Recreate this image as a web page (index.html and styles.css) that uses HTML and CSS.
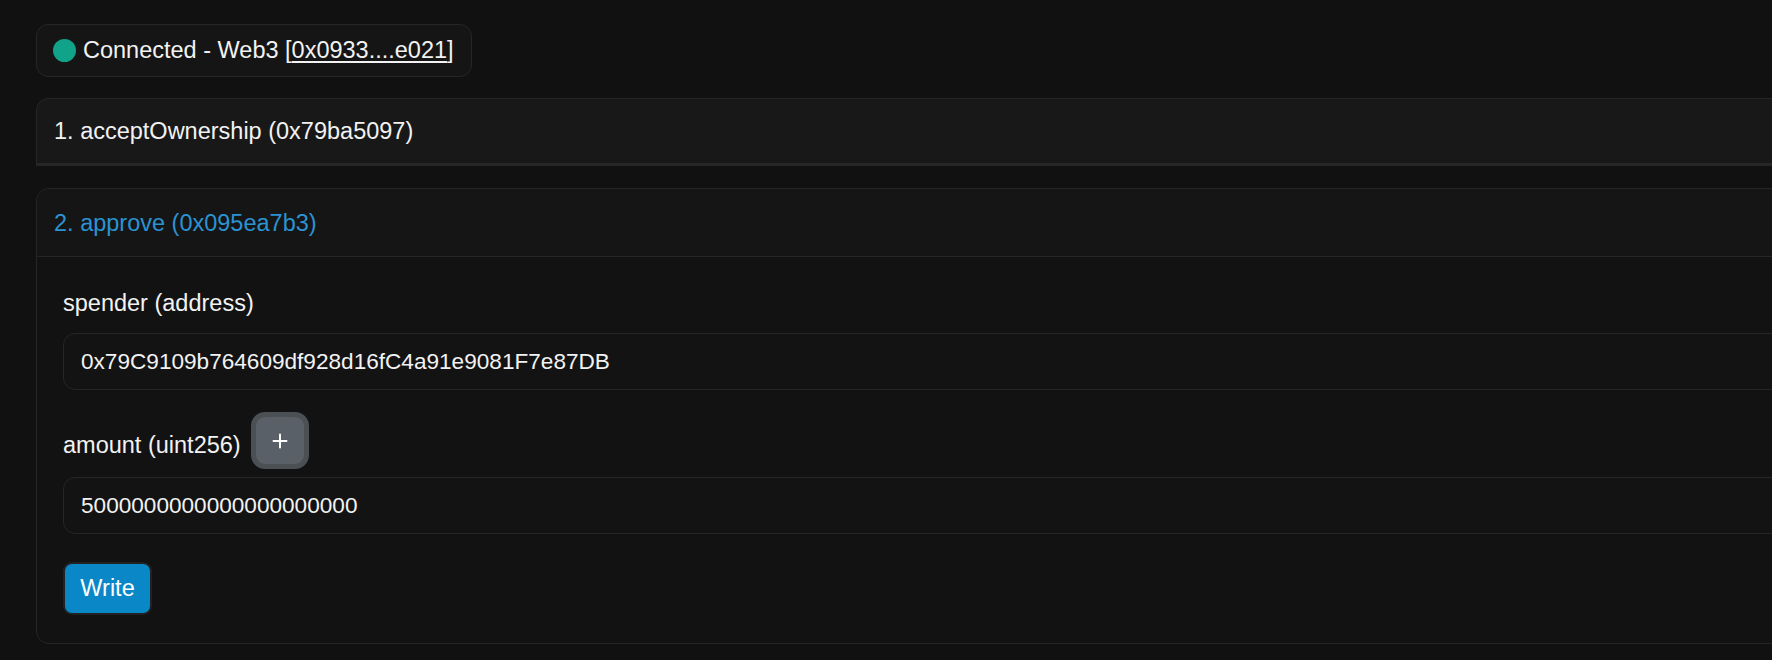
FILE: index.html
```html
<!DOCTYPE html>
<html>
<head>
<meta charset="utf-8">
<link rel="stylesheet" href="styles.css">
</head>
<body>
<div class="page">
  <div class="status">
    <span class="dot"></span>
    <span>Connected - Web3 [<a class="addr" href="#">0x0933....e021</a>]</span>
  </div>

  <div class="card card-collapsed">
    <div class="card-header">1. acceptOwnership (0x79ba5097)</div>
  </div>

  <div class="card card-open">
    <div class="card-header active">2. approve (0x095ea7b3)</div>
    <div class="card-body">
      <div class="field">
        <div class="label-row first"><span class="label">spender (address)</span></div>
        <input class="text-input" type="text" value="0x79C9109b764609df928d16fC4a91e9081F7e87DB">
      </div>
      <div class="field">
        <div class="label-row">
          <span class="label shifted">amount (uint256)</span>
          <button class="plus-btn" type="button">
            <svg width="18" height="18" viewBox="0 0 18 18"><path d="M9 2.5v13M2.5 9h13" stroke="#fff" stroke-width="2" stroke-linecap="round"/></svg>
          </button>
        </div>
        <input class="text-input" type="text" value="5000000000000000000000">
      </div>
      <button class="write-btn" type="button">Write</button>
    </div>
  </div>
</div>
</body>
</html>
```
FILE: styles.css
```css
html, body {
  margin: 0;
  padding: 0;
  background: #111111;
  overflow: hidden;
}
body {
  font-family: "Liberation Sans", Arial, sans-serif;
  font-size: 23.5px;
  color: #f2f2f2;
}
.page {
  padding: 24px 0 0 36px;
  width: 1800px;
}
.status {
  display: inline-flex;
  align-items: center;
  gap: 7px;
  height: 51px;
  padding: 0 17px 0 16px;
  border: 1px solid #262626;
  border-radius: 12px;
  background: #151515;
  line-height: 27px;
}
.dot {
  width: 23px;
  height: 23px;
  border-radius: 50%;
  background: #10a389;
  flex: none;
}
.addr {
  color: #f2f2f2;
  text-decoration: underline;
  text-underline-offset: 3px;
}
.card {
  width: 1780px;
  border: 1px solid #262626;
  box-sizing: border-box;
}
.card-collapsed {
  margin-top: 21px;
  border-radius: 13px 13px 0 0;
  border-bottom: 2px solid #262626;
  background: #181818;
}
.card-open {
  margin-top: 22px;
  border-radius: 13px;
  background: #121212;
}
.card-header {
  padding: 19px 17px 19px 17px;
  line-height: 27px;
  border-bottom: 1px solid #262626;
}
.card-collapsed .card-header {
  padding-bottom: 18px;
}
.card-open .card-header {
  background: #151515;
  border-radius: 13px 13px 0 0;
  padding: 21px 17px 19px 17px;
}
.card-header.active {
  color: #2b93d2;
}
.card-body {
  padding: 0 26px 28px 26px;
}
.field {
  display: flex;
  flex-direction: column;
}
.label-row {
  display: flex;
  align-items: center;
  gap: 10px;
  margin-top: 22px;
  margin-bottom: 8px;
}
.label-row.first {
  margin-top: 33px;
  margin-bottom: 17px;
  line-height: 26px;
}
.label {
  line-height: 26px;
}
.label.shifted {
  margin-top: 9px;
}
.plus-btn {
  width: 58px;
  height: 57px;
  box-sizing: border-box;
  border: 5px solid #4b5055;
  border-radius: 14px;
  background: #596067;
  display: flex;
  align-items: center;
  justify-content: center;
  padding: 0;
  margin-left: 0;
}
.plus-btn svg {
  display: block;
}
.text-input {
  width: 1740px;
  height: 57px;
  box-sizing: border-box;
  border: 1px solid #262626;
  border-radius: 12px;
  background: #131313;
  color: #f2f2f2;
  font-family: "Liberation Sans", Arial, sans-serif;
  font-size: 22.6px;
  padding: 0 17px;
  outline: none;
}
.write-btn {
  margin-top: 28px;
  display: block;
  width: 89px;
  height: 53px;
  box-sizing: border-box;
  border: 2px solid #222222;
  border-radius: 9px;
  background: #0a87c6;
  color: #ffffff;
  font-family: "Liberation Sans", Arial, sans-serif;
  font-size: 23.5px;
  padding: 0;
}
```
